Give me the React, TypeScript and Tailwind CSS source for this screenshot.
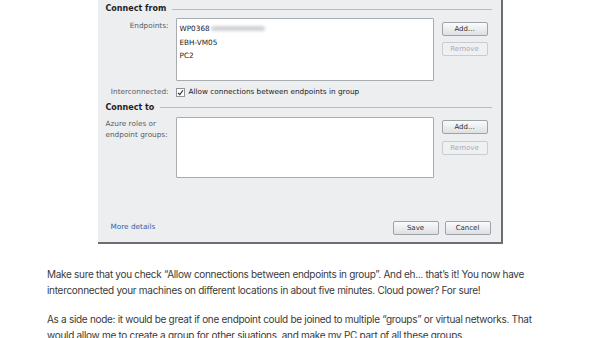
import React from 'react';

const dlgFont = { fontFamily: '"DejaVu Sans", Verdana, sans-serif' };

const DlgButton: React.FC<{ label: string; disabled?: boolean; className?: string }> = ({ label, disabled, className }) => (
  <div
    className={`h-[14px] flex items-center justify-center rounded-[2px] border text-[7px] ${
      disabled
        ? 'border-[#c9cdd1] bg-[#eef0f2] text-[#a9adb2]'
        : 'border-[#9ea3a8] bg-gradient-to-b from-[#fafbfc] to-[#dde0e4] text-[#333]'
    } ${className ?? ''}`}
  >
    {label}
  </div>
);

const SectionHeader: React.FC<{ title: string }> = ({ title }) => (
  <div className="flex items-center gap-[6px] pr-[9px]">
    <span className="text-[8px] font-bold text-[#1e1e1e] leading-none">{title}</span>
    <div className="flex-1 h-px bg-[#b9bdc2]" />
  </div>
);

const App: React.FC = () => {
  return (
    <div className="w-[600px] h-[338px] overflow-hidden bg-white">
      {/* screenshot of the dialog */}
      <div className="mx-auto w-[405px] bg-[#eceef0] border-r-2 border-b-2 border-[#6b6e72] pl-[8px] pt-[5px]" style={dlgFont}>
        <SectionHeader title="Connect from" />

        <div className="grid grid-cols-[63px_258px_47px] gap-x-[7px] mt-[5px]">
          <div className="text-[7.3px] text-[#5a5d61] text-right pt-[3px]">Endpoints:</div>
          <div className="h-[63px] bg-white border border-[#a7acb1] rounded-[1px] px-[3px] pt-[3px] text-[7.3px] text-[#222] leading-[13.5px]">
            <div className="flex items-center">
              WP0368
              <span className="ml-[1px] inline-block w-[54px] h-[5px] rounded-full bg-[#cfd2d6] blur-[1.5px]" />
            </div>
            <div>EBH-VM05</div>
            <div>PC2</div>
          </div>
          <div className="flex flex-col gap-[6px] pt-[4px] ml-[1px]">
            <DlgButton label="Add..." />
            <DlgButton label="Remove" disabled />
          </div>
        </div>

        <div className="grid grid-cols-[63px_1fr] gap-x-[7px] mt-[6px] items-center">
          <div className="text-[7.3px] text-[#5a5d61] text-right">Interconnected:</div>
          <div className="flex items-center gap-[4px] text-[7.3px] text-[#222]">
            <div className="w-[9px] h-[9px] bg-white border border-[#8e9398] flex items-center justify-center">
              <svg width="7" height="7" viewBox="0 0 7 7">
                <path d="M1 3.8 L2.8 5.6 L6 1.2" fill="none" stroke="#2a2d30" strokeWidth="1.1" />
              </svg>
            </div>
            Allow connections between endpoints in group
          </div>
        </div>

        <div className="mt-[6px]">
          <SectionHeader title="Connect to" />
        </div>

        <div className="grid grid-cols-[63px_258px_47px] gap-x-[7px] mt-[5px]">
          <div className="text-[7.3px] text-[#5a5d61] leading-[11px] pt-[1px]">
            Azure roles or
            <br />
            endpoint groups:
          </div>
          <div className="h-[61px] bg-white border border-[#a7acb1] rounded-[1px]" />
          <div className="flex flex-col gap-[7px] pt-[3px] ml-[1px]">
            <DlgButton label="Add..." />
            <DlgButton label="Remove" disabled />
          </div>
        </div>

        <div className="flex items-center justify-between pl-[5px] pr-[10px] mt-[43px] pb-[7px]">
          <span className="text-[7.3px] text-[#3b5ea6]">More details</span>
          <div className="flex gap-[6px]">
            <DlgButton label="Save" className="w-[46px]" />
            <DlgButton label="Cancel" className="w-[46px]" />
          </div>
        </div>
      </div>

      {/* article text */}
      <div
        className="w-[506px] mx-auto mt-[22px] text-[10px] tracking-[-0.3px] leading-[16px] text-[#3a3a3a] flex flex-col gap-[13px]"
        style={{ fontFamily: 'Inter, "Noto Sans", sans-serif' }}
      >
        <p>
          Make sure that you check “Allow connections between endpoints in group”. And eh... that’s it! You now have
          interconnected your machines on different locations in about five minutes. Cloud power? For sure!
        </p>
        <p>
          As a side node: it would be great if one endpoint could be joined to multiple “groups” or virtual networks. That
          would allow me to create a group for other siuations, and make my PC part of all these groups.
        </p>
      </div>
    </div>
  );
};

export default App;
